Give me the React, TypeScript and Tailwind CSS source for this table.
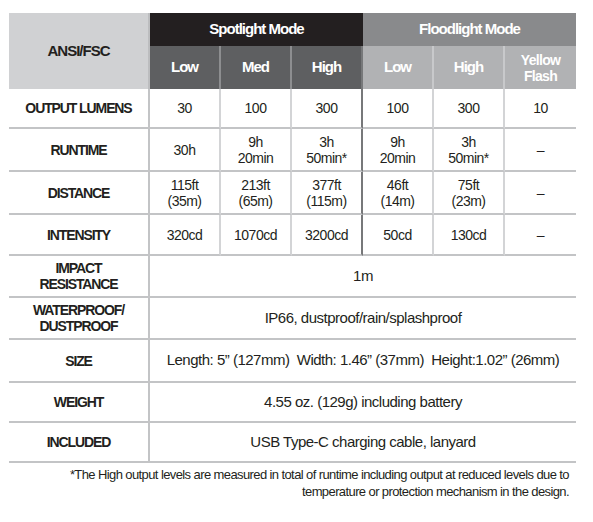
import React from 'react';

const font = { fontFamily: '"Liberation Sans", Arial, sans-serif' };

type Row = { label: React.ReactNode; h: string; values?: React.ReactNode[]; full?: React.ReactNode; bold?: boolean };

const rows: Row[] = [
    { label: 'OUTPUT LUMENS', h: 'h-[40px]', values: ['30', '100', '300', '100', '300', '10'] },
    {
        label: 'RUNTIME',
        h: 'h-[43px]',
        values: ['30h', <>9h<br />20min</>, <>3h<br />50min*</>, <>9h<br />20min</>, <>3h<br />50min*</>, '–'],
    },
    {
        label: 'DISTANCE',
        h: 'h-[43px]',
        values: [
            <>115ft<br />(35m)</>,
            <>213ft<br />(65m)</>,
            <>377ft<br />(115m)</>,
            <>46ft<br />(14m)</>,
            <>75ft<br />(23m)</>,
            '–',
        ],
    },
    { label: 'INTENSITY', h: 'h-[41px]', values: ['320cd', '1070cd', '3200cd', '50cd', '130cd', '–'] },
    { label: <>IMPACT<br />RESISTANCE</>, h: 'h-[42px]', full: '1m' },
    { label: <>WATERPROOF/<br />DUSTPROOF</>, h: 'h-[42px]', full: 'IP66, dustproof/rain/splashproof' },
    {
        label: 'SIZE',
        h: 'h-[43px]',
        full: <span className="whitespace-pre">{'Length: 5” (127mm)  Width: 1.46” (37mm)  Height:1.02” (26mm)'}</span>,
    },
    { label: 'WEIGHT', h: 'h-[40px]', full: '4.55 oz. (129g) including battery', bold: true },
    { label: 'INCLUDED', h: 'h-[40px]', full: 'USB Type-C charging cable, lanyard' },
];

export default function App() {
    return (
        <div className="w-[593px] h-[522px] bg-white text-[#231f20] pl-[9px] pt-[13px]" style={font}>
            <div className="grid grid-cols-[141px_repeat(6,71px)] w-[567px]">
                {/* header */}
                <div className="row-span-2 bg-[#d0d1d3] flex items-center justify-center font-bold text-[15px] tracking-[-1px] border-r-2 border-[#bcbdbf]">
                    ANSI/FSC
                </div>
                <div className="col-span-3 h-[33px] bg-[#231f20] text-white font-bold text-[15px] tracking-[-1px] flex items-center justify-center">
                    Spotlight Mode
                </div>
                <div className="col-span-3 h-[33px] bg-[#898a8c] text-white font-bold text-[15px] tracking-[-1px] flex items-center justify-center">
                    Floodlight Mode
                </div>
                {['Low', 'Med', 'High'].map((t, i) => (
                    <div
                        key={t}
                        className={`h-[43px] bg-[#5e5f61] text-white font-bold text-[15px] tracking-[-1px] flex items-center justify-center ${i < 2 ? 'border-r-2 border-[#8d8e90]' : 'border-r-2 border-[#77787a]'}`}
                    >
                        {t}
                    </div>
                ))}
                {['Low', 'High'].map((t) => (
                    <div
                        key={'f' + t}
                        className="h-[43px] bg-[#b1b2b4] text-white font-bold text-[15px] tracking-[-1px] flex items-center justify-center border-r-2 border-[#c8c9cb]"
                    >
                        {t}
                    </div>
                ))}
                <div className="h-[43px] bg-[#b1b2b4] text-white font-bold text-[14px] tracking-[-0.7px] leading-[16px] flex items-center justify-center text-center">
                    Yellow<br />Flash
                </div>

                {/* body */}
                {rows.map((r, ri) => (
                    <React.Fragment key={ri}>
                        <div
                            className={`${r.h} border-b-2 border-r-2 border-[#c3c4c6] flex items-center justify-center text-center font-bold text-[14px] tracking-[-1.1px] leading-[16px]`}
                        >
                            {r.label}
                        </div>
                        {r.values ? (
                            r.values.map((v, vi) => (
                                <div
                                    key={vi}
                                    className={`${r.h} border-b-2 border-b-[#c3c4c6] flex items-center justify-center text-center text-[14px] tracking-[-0.5px] leading-[16px] ${vi === 2 ? 'border-r-2 border-r-[#77787a]' : vi < 5 ? 'border-r-2 border-r-[#d3d4d6]' : ''}`}
                                >
                                    {v}
                                </div>
                            ))
                        ) : (
                            <div
                                className={`${r.h} col-span-6 border-b-2 border-[#c3c4c6] flex items-center justify-center text-[15px] tracking-[-0.5px] ${r.bold ? 'font-medium' : ''}`}
                            >
                                {r.full}
                            </div>
                        )}
                    </React.Fragment>
                ))}
            </div>
            <div className="w-[560px] text-right text-[13px] tracking-[-0.6px] leading-[17px] mt-[3px]">
                *The High output levels are measured in total of runtime including output at reduced levels due to
                <br />
                temperature or protection mechanism in the design.
            </div>
        </div>
    );
}
